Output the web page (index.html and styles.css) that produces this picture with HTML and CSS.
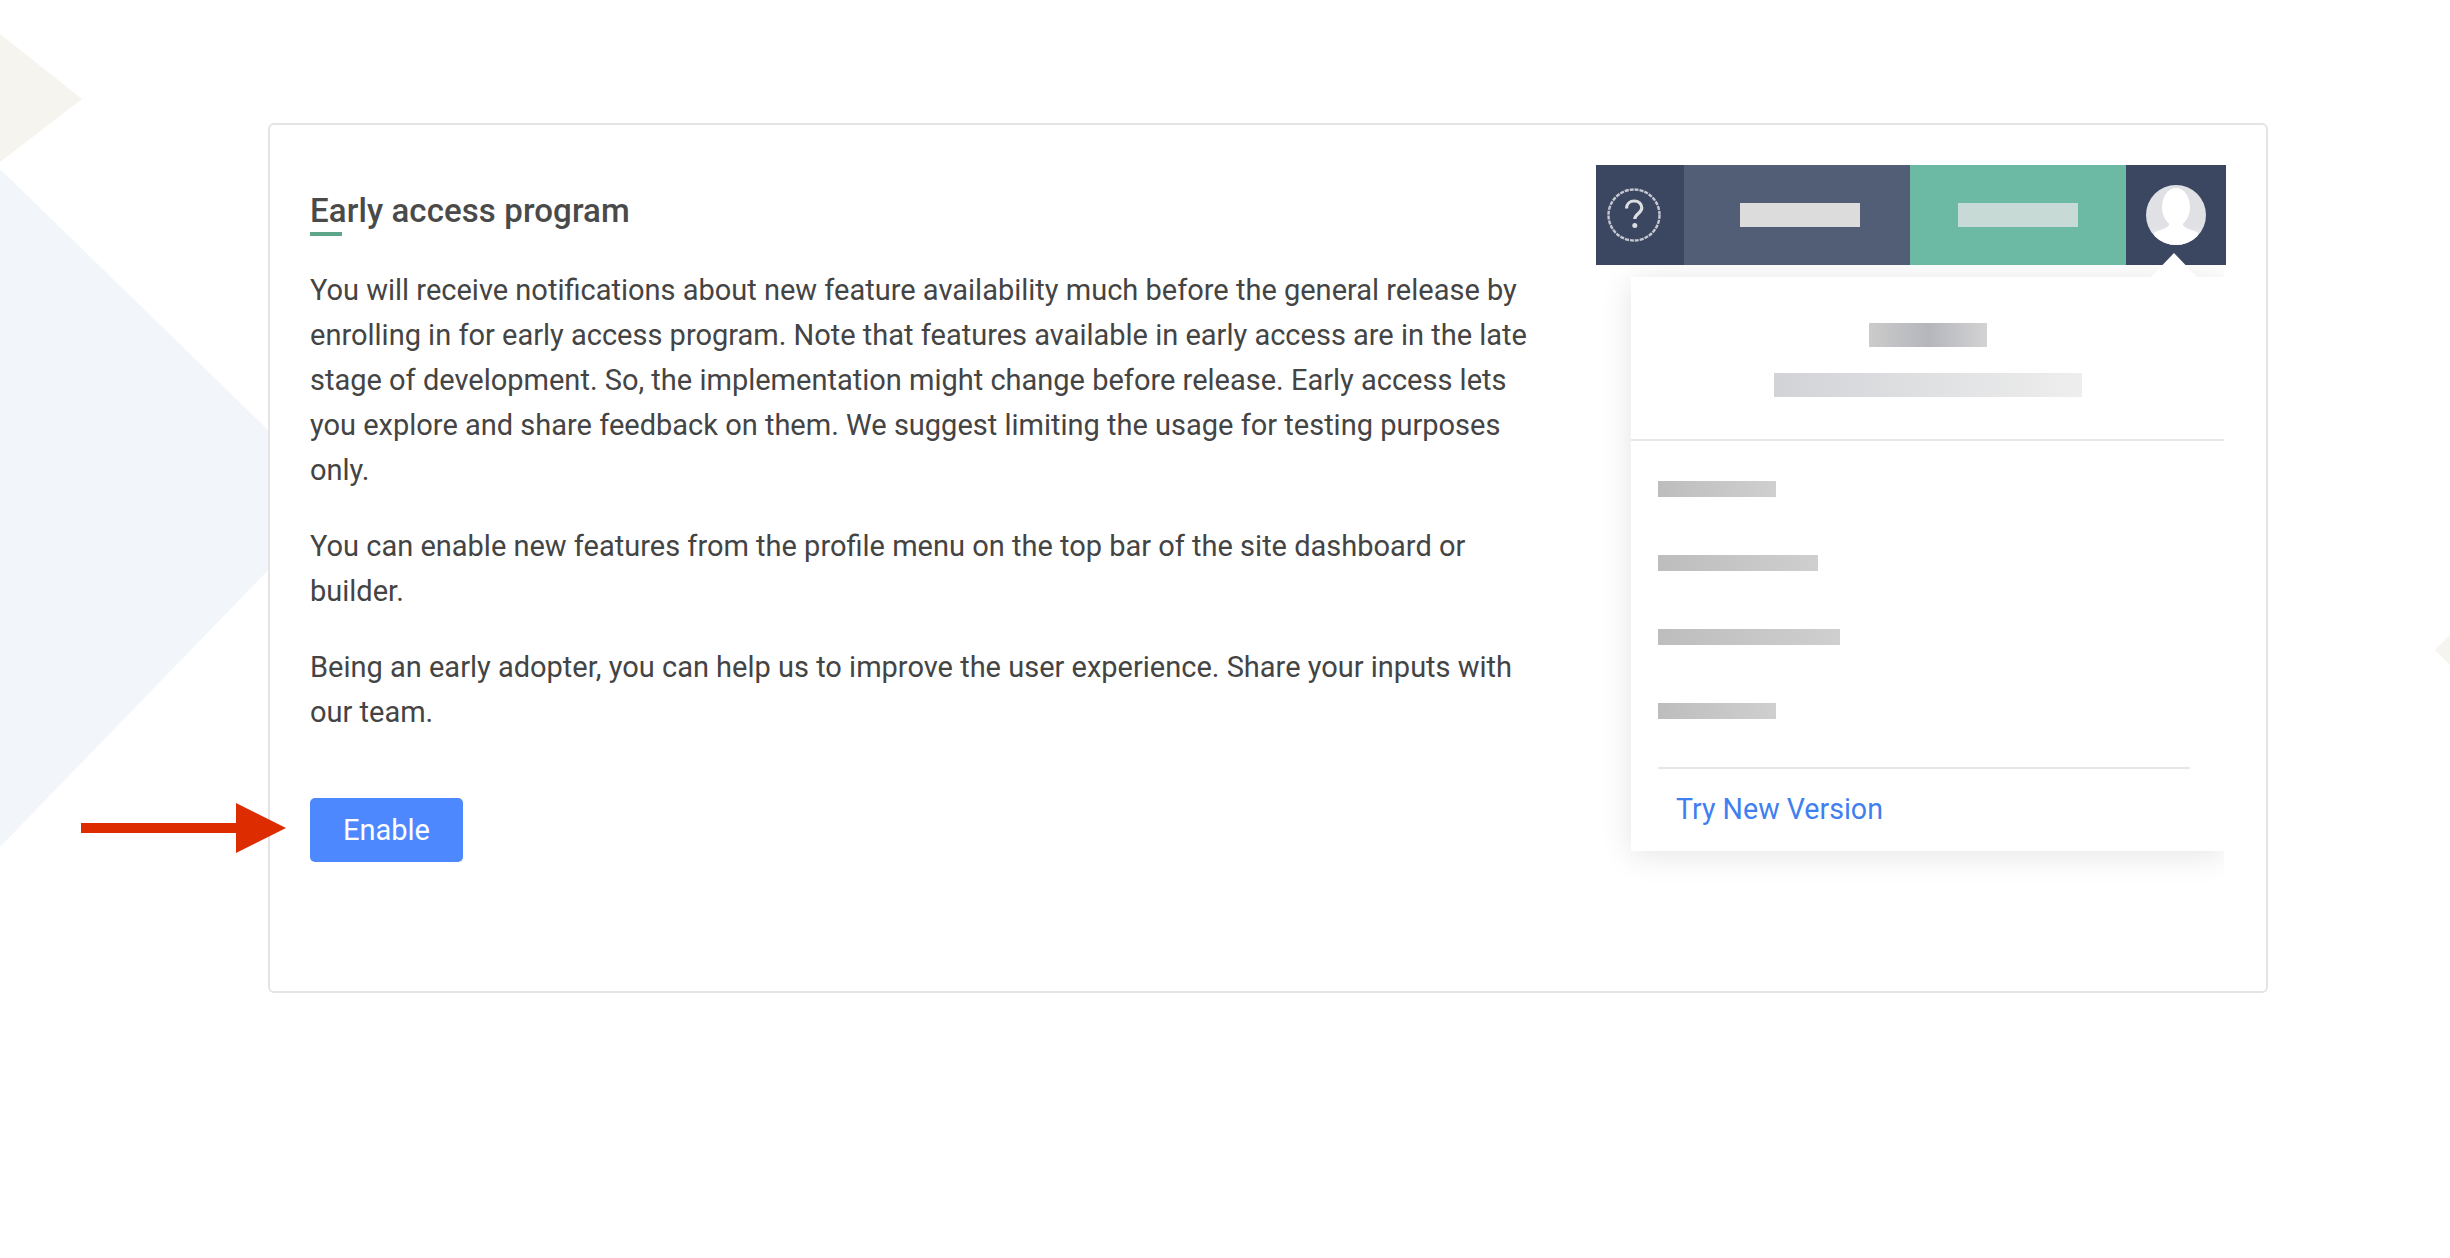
FILE: index.html
```html
<!DOCTYPE html>
<html lang="en">
<head>
<meta charset="utf-8">
<title>Early access program</title>
<link rel="stylesheet" href="styles.css">
</head>
<body>
<div class="page">
  <svg class="backdrop" width="2450" height="1258" viewBox="0 0 2450 1258" aria-hidden="true">
    <polygon points="0,34 82,99 0,162" fill="#f6f4ef"/>
    <polygon points="0,169 338,498 0,847" fill="#f2f5fa"/>
    <polygon points="2450,635 2435,650 2450,665" fill="#f6f4ef"/>
  </svg>
  <main class="card">
    <section class="copy">
      <h1 class="title">Early access program</h1>
      <p class="para">You will receive notifications about new feature availability much before the general release by enrolling in for early access program. Note that features available in early access are in the late stage of development. So, the implementation might change before release. Early access lets you explore and share feedback on them. We suggest limiting the usage for testing purposes only.</p>
      <p class="para">You can enable new features from the profile menu on the top bar of the site dashboard or builder.</p>
      <p class="para">Being an early adopter, you can help us to improve the user experience. Share your inputs with our team.</p>
      <button class="enable" type="button">Enable</button>
    </section>
    <aside class="mock">
      <div class="topbar">
        <div class="seg seg-help">
          <svg class="soft" width="54" height="54" viewBox="0 0 54 54" aria-hidden="true">
            <circle cx="27" cy="27" r="25.5" fill="none" stroke="#c3c7cf" stroke-width="2.4" stroke-dasharray="4 1"/>
            <path d="M19.5 20.5c0-4.500 3.400-7.500 7.800-7.500 4.200 0 7.500 2.800 7.500 6.800 0 5.400-7 5.800-7 11.200" fill="none" stroke="#dcdee2" stroke-width="3.200"/>
            <circle cx="27.8" cy="37.500" r="2.500" fill="#dcdee2"/>
          </svg>
        </div>
        <div class="seg seg-slate"><span class="chip chip-slate"></span></div>
        <div class="seg seg-green"><span class="chip chip-green"></span></div>
        <div class="seg seg-user">
          <svg class="soft" width="60" height="60" viewBox="0 0 60 60" aria-hidden="true">
            <defs>
              <linearGradient id="av" x1="0" y1="0" x2="0" y2="1">
                <stop offset="0" stop-color="#dfe1e5"/>
                <stop offset="0.7" stop-color="#dfe1e5"/>
                <stop offset="1" stop-color="#f4f5f6"/>
              </linearGradient>
              <clipPath id="avc"><circle cx="30" cy="30" r="30"/></clipPath>
            </defs>
            <circle cx="30" cy="30" r="30" fill="url(#av)"/>
            <g clip-path="url(#avc)" fill="#fff">
              <ellipse cx="30" cy="22" rx="14" ry="19"/>
              <path d="M23 34h14v6c2 4 11 5 15 8l-2 13H10L8 48c4-3 13-4 15-8z"/>
            </g>
          </svg>
        </div>
      </div>
      <div class="menu">
        <span class="caret"></span>
        <div class="profile">
          <span class="bar bar-name"></span>
          <span class="bar bar-mail"></span>
        </div>
        <ul class="items">
          <li class="bar item item-a"></li>
          <li class="bar item item-b"></li>
          <li class="bar item item-c"></li>
          <li class="bar item item-a"></li>
        </ul>
        <div class="foot"><a class="try" href="#">Try New Version</a></div>
      </div>
    </aside>
  </main>
  <svg class="arrow" width="205" height="50" viewBox="0 0 205 50" aria-hidden="true">
    <polygon points="0,20 155,20 155,0 205,25 155,50 155,30 0,30" fill="#dd2c00"/>
  </svg>
</div>
</body>
</html>
```
FILE: styles.css
```css
* { box-sizing: border-box; }
html, body { margin: 0; padding: 0; background: #fff; }
body { font-family: "Roboto", "Liberation Sans", sans-serif; color: #444; }
.page { position: relative; width: 2450px; height: 1258px; padding: 123px 0 0 268px; overflow: hidden; }
.backdrop { position: absolute; left: 0; top: 0; }
.arrow { position: absolute; left: 81px; top: 803px; z-index: 2; }
.card { position: relative; z-index: 1; width: 2000px; height: 870px; padding: 40px 40px 0; display: flex; justify-content: space-between; background: #fff; border: 2px solid #e4e4e4; border-radius: 6px; }
.copy { width: 1225px; padding-top: 26px; }
.title { margin: 0 0 32px; padding-bottom: 5px; position: relative; font-size: 33px; line-height: 40px; font-weight: 500; letter-spacing: 0.1px; color: #4a4a4a; }
.title::after { content: ""; position: absolute; left: 0; bottom: 0; width: 32px; height: 4px; background: #5fa58a; }
.para { margin: 0 0 31px; font-size: 29px; line-height: 45px; color: #444; }
.enable { display: block; width: 153px; height: 64px; margin-top: 63px; padding: 0; border: 0; border-radius: 5px; background: #4d88ff; color: #fff; font: 400 29px/64px "Roboto", "Liberation Sans", sans-serif; }
.mock { width: 630px; height: 730px; overflow: hidden; }
.topbar { position: relative; z-index: 1; display: flex; height: 100px; }
.seg { display: flex; align-items: center; justify-content: center; }
.seg-help { width: 88px; background: #3b4660; padding-right: 12px; }
.seg-slate { width: 226px; background: #525e75; padding-left: 6px; }
.seg-green { width: 216px; background: #6cbaa4; }
.seg-user { width: 100px; background: #3b4660; }
.soft { filter: blur(0.6px); }
.chip { display: block; width: 120px; height: 24px; filter: blur(0.5px); }
.chip-slate { background: #dcdcdc; }
.chip-green { background: #c8dad5; }
.menu { position: relative; width: 593px; height: 574px; margin: 12px 0 0 35px; background: #fff; }
.menu::before { content: ""; position: absolute; inset: 0; z-index: -1; box-shadow: 0 4px 30px rgba(0, 0, 0, 0.11); clip-path: inset(-50px 0 -50px -50px); }
.caret { position: absolute; left: 520px; top: -24px; width: 46px; height: 24px; background: #fff; clip-path: polygon(50% 0, 100% 100%, 0 100%); z-index: 2; }
.bar { display: block; filter: blur(0.5px); }
.profile { height: 164px; padding-top: 46px; border-bottom: 2px solid #e8e8ec; }
.bar-name { width: 118px; height: 24px; margin: 0 auto 26px; background: linear-gradient(90deg, #cbcbcb, #b5b6bc 50%, #d3d3d3); }
.bar-mail { width: 308px; height: 24px; margin: 0 auto; background: linear-gradient(90deg, #d2d3d6, #dedfe1 45%, #eeeeee); }
.items { list-style: none; margin: 0; padding: 40px 0 0 27px; display: flex; flex-direction: column; gap: 58px; height: 326px; }
.item { height: 16px; background: linear-gradient(90deg, #bdbdbd, #cfcfcf); }
.item-a { width: 118px; }
.item-b { width: 160px; }
.item-c { width: 182px; }
.foot { margin-left: 27px; width: 532px; border-top: 2px solid #e6e6ea; padding: 20px 0 0 18px; }
.try { color: #3f7ff0; font-size: 28.6px; line-height: 40px; text-decoration: none; }
```
